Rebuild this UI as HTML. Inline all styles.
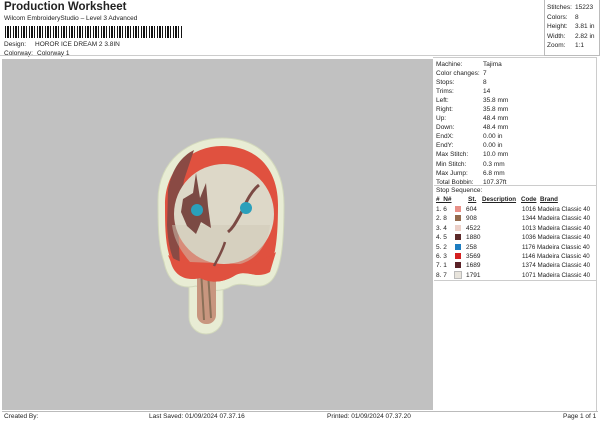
<!DOCTYPE html>
<html><head><style>
body{margin:0;width:600px;height:424px;background:#fff;font-family:"Liberation Sans",sans-serif;color:#222;position:relative;overflow:hidden}
.a{position:absolute;font-size:6.5px;white-space:nowrap}
</style></head><body>
<div class="a" style="left:4px;top:1px;font-size:11.5px;font-weight:bold">Production Worksheet</div>
<div class="a" style="left:4px;top:15px">Wilcom EmbroideryStudio – Level 3 Advanced</div>
<div style="position:absolute;left:5px;top:26px;width:177px;height:12px;background:repeating-linear-gradient(90deg,#111 0 1px,#fff 1px 2px,#111 2px 4px,#fff 4px 5px,#111 5px 6px,#fff 6px 8px)"></div>
<div class="a" style="left:4px;top:41px">Design:</div><div class="a" style="left:35px;top:41px">HOROR ICE DREAM 2 3.8IN</div>
<div class="a" style="left:4px;top:50px">Colorway:</div><div class="a" style="left:37px;top:50px">Colorway 1</div>
<div style="position:absolute;left:544px;top:0;width:54px;height:55px;border-left:1px solid #bbb;border-bottom:1px solid #bbb;border-right:1px solid #bbb"></div>
<div style="position:absolute;left:0;top:0;width:544px;height:55px;border-bottom:1px solid #ccc"></div>
<div class="a" style="left:547px;top:3px;line-height:9.5px">Stitches:<br>Colors:<br>Height:<br>Width:<br>Zoom:</div>
<div class="a" style="left:575px;top:3px;line-height:9.5px">15223<br>8<br>3.81 in<br>2.82 in<br>1:1</div>
<div style="position:absolute;left:2px;top:59px;width:431px;height:351px;background:#c1c1c1"></div>
<div style="position:absolute;left:433px;top:57px;width:163px;height:353px;border:1px solid #ccc;border-left:none"></div>
<svg style="position:absolute;left:0;top:0" width="600" height="424">
<g>
<rect x="189" y="258" width="34" height="76" rx="17" fill="#e8ecd4" stroke="#d2d8bc"/>
<path d="M158 200 C158 160 190 138 222 138 C262 138 284 165 284 205 C284 240 282 272 270 282 C258 292 245 280 232 286 C222 292 210 292 196 286 C180 290 168 282 164 262 C158 245 158 225 158 200Z" fill="#e8ecd4" stroke="#d2d8bc"/>
<rect x="197" y="264" width="19" height="60" rx="9" fill="#c8967f"/>
<path d="M201 270 L204 320 M208 272 L211 318" stroke="#8a7058" stroke-width="2"/>
<path d="M165 205 C165 168 192 146 222 146 C258 146 278 170 278 205 C278 235 276 262 266 272 C256 280 246 268 234 276 C224 282 212 284 200 278 C184 282 172 274 170 258 C165 242 165 225 165 205Z" fill="#e0513f"/>
<path d="M168 190 C172 168 182 156 194 150 L184 180 L178 220 L180 268 C172 262 168 245 167 225Z" fill="#8a4a44"/>
<circle cx="224" cy="214" r="50" fill="#ddd8c8"/>
<path d="M172 225 L270 225 C268 245 256 260 240 264 L190 262 C180 250 174 240 172 225Z" fill="#cfc8b6" opacity=".5"/>
<path d="M168 255 C190 272 250 272 276 252 L270 272 C256 280 246 268 234 276 C224 282 212 284 200 278 C184 282 174 272 168 255Z" fill="#e0513f"/>
<path d="M196 173 L193 193 L183 199 L181 212 L187 226 L196 234 L201 222 L211 228 L208 206 L206 183 L200 198Z" fill="#7b4a44"/>
<path d="M259 185 C250 192 245 205 240 215 C236 222 233 228 228 232" stroke="#7b4a44" stroke-width="3" fill="none"/>
<path d="M225 242 C222 252 218 258 214 266" stroke="#7b4a44" stroke-width="2.5" fill="none"/>
<circle cx="197" cy="210" r="6" fill="#2aa0bb"/>
<circle cx="246" cy="208" r="6" fill="#2aa0bb"/>
</g>
</svg>
<div class="a" style="left:436px;top:60px;line-height:9.05px">Machine:<br>Color changes:<br>Stops:<br>Trims:<br>Left:<br>Right:<br>Up:<br>Down:<br>EndX:<br>EndY:<br>Max Stitch:<br>Min Stitch:<br>Max Jump:<br>Total Bobbin:</div>
<div class="a" style="left:483px;top:60px;line-height:9.05px">Tajima<br>7<br>8<br>14<br>35.8 mm<br>35.8 mm<br>48.4 mm<br>48.4 mm<br>0.00 in<br>0.00 in<br>10.0 mm<br>0.3 mm<br>6.8 mm<br>107.37ft</div>
<div style="position:absolute;left:434px;top:185px;width:162px;border-top:1px solid #ccc"></div>
<div class="a" style="left:436px;top:187px">Stop Sequence:</div>
<div class="a" style="left:436px;top:196px;font-weight:bold;text-decoration:underline">#&nbsp; N#</div>
<div class="a" style="left:468px;top:196px;font-weight:bold;text-decoration:underline">St.</div>
<div class="a" style="left:482px;top:196px;font-weight:bold;text-decoration:underline;font-size:6.2px">Description</div>
<div class="a" style="left:521px;top:196px;font-weight:bold;text-decoration:underline;font-size:6.2px">Code</div>
<div class="a" style="left:540px;top:196px;font-weight:bold;text-decoration:underline;font-size:6.2px">Brand</div>
<div class="a" style="left:436px;top:205px;line-height:9.4px">1. 6<br>2. 8<br>3. 4<br>4. 5<br>5. 2<br>6. 3<br>7. 1<br>8. 7</div>
<div style="position:absolute;left:455px;top:206px;width:6px;height:6px;background:#e89088"></div>
<div style="position:absolute;left:455px;top:215px;width:6px;height:6px;background:#946a4c"></div>
<div style="position:absolute;left:455px;top:225px;width:6px;height:6px;background:#ecd0c8"></div>
<div style="position:absolute;left:455px;top:234px;width:6px;height:6px;background:#5c2a2a"></div>
<div style="position:absolute;left:455px;top:244px;width:6px;height:6px;background:#1c7cc0"></div>
<div style="position:absolute;left:455px;top:253px;width:6px;height:6px;background:#d42020"></div>
<div style="position:absolute;left:455px;top:262px;width:6px;height:6px;background:#5a2228"></div>
<div style="position:absolute;left:455px;top:272px;width:6px;height:6px;background:#e8e4dc;outline:1px solid #bbb"></div>
<div class="a" style="left:466px;top:205px;line-height:9.4px">604<br>908<br>4522<br>1880<br>258<br>3569<br>1689<br>1791</div>
<div class="a" style="left:522px;top:205px;line-height:9.4px;font-size:6.2px">1016 Madeira Classic 40<br>1344 Madeira Classic 40<br>1013 Madeira Classic 40<br>1036 Madeira Classic 40<br>1176 Madeira Classic 40<br>1146 Madeira Classic 40<br>1374 Madeira Classic 40<br>1071 Madeira Classic 40</div>
<div style="position:absolute;left:434px;top:280px;width:162px;border-top:1px solid #ccc"></div>
<div style="position:absolute;left:2px;top:411px;width:596px;border-top:1px solid #bbb"></div>
<div class="a" style="left:4px;top:413px">Created By:</div>
<div class="a" style="left:149px;top:413px">Last Saved: 01/09/2024 07.37.16</div>
<div class="a" style="left:327px;top:413px">Printed: 01/09/2024 07.37.20</div>
<div class="a" style="left:563px;top:413px">Page 1 of 1</div>
</body></html>
